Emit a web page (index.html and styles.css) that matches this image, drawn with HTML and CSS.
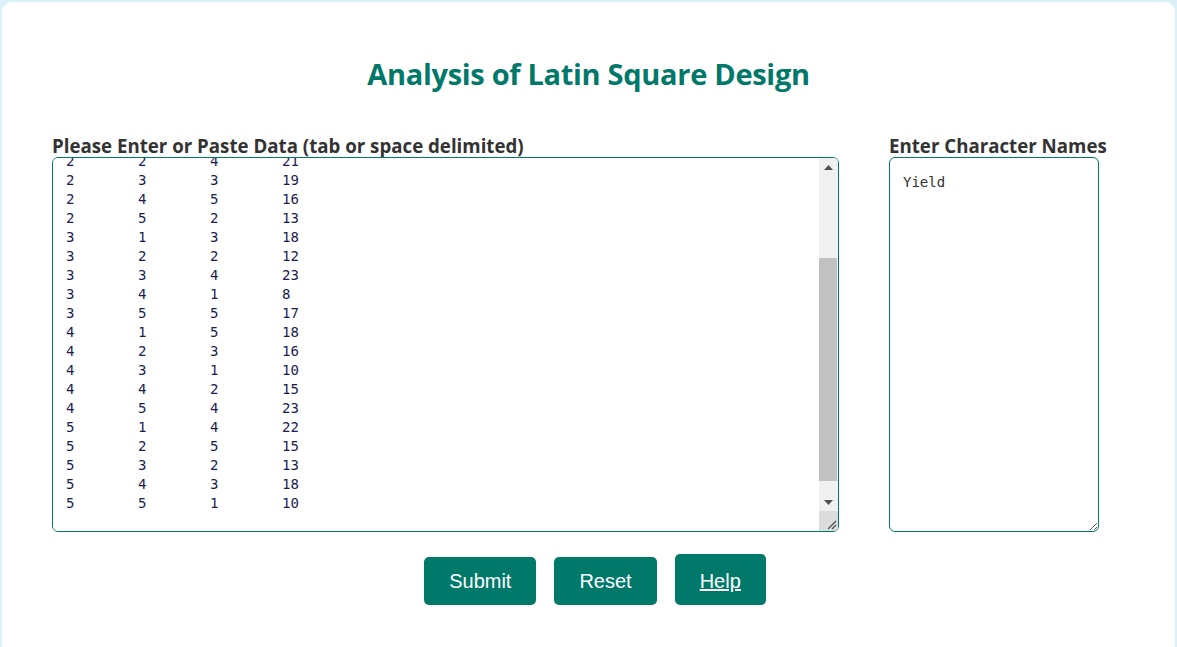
FILE: index.html
```html
<!DOCTYPE html>
<html lang="en">
<head>
<meta charset="utf-8">
<title>Analysis of Latin Square Design</title>
<link rel="stylesheet" href="styles.css">
</head>
<body>
<div class="card">
  <h1 class="title">Analysis of Latin Square Design</h1>
  <form class="form">
    <div class="fields">
      <div class="field field-main">
        <label class="label" for="data">Please Enter or Paste Data (tab or space delimited)</label>
        <div class="box-wrap">
          <textarea id="data" class="box box-data" spellcheck="false">1	1	1	14
1	2	5	22
1	3	4	20
1	4	2	18
1	5	3	25
2	1	2	12
2	2	4	21
2	3	3	19
2	4	5	16
2	5	2	13
3	1	3	18
3	2	2	12
3	3	4	23
3	4	1	8
3	5	5	17
4	1	5	18
4	2	3	16
4	3	1	10
4	4	2	15
4	5	4	23
5	1	4	22
5	2	5	15
5	3	2	13
5	4	3	18
5	5	1	10</textarea>
          <div class="sbar" aria-hidden="true">
            <div class="sbar-btn">
              <svg width="9" height="5" viewBox="0 0 9 5"><polygon points="0,5 9,5 4.5,0" fill="#505050"/></svg>
            </div>
            <div class="sbar-track"><div class="sbar-thumb"></div></div>
            <div class="sbar-btn">
              <svg width="9" height="5" viewBox="0 0 9 5"><polygon points="0,0 9,0 4.5,5" fill="#505050"/></svg>
            </div>
            <div class="sbar-corner">
              <svg width="11" height="11" viewBox="0 0 11 11"><path d="M10 2 L2 10 M10 6 L6 10" stroke="#555" stroke-width="1.3" fill="none"/></svg>
            </div>
          </div>
        </div>
      </div>
      <div class="field field-side">
        <label class="label" for="names">Enter Character Names</label>
        <textarea id="names" class="box box-names" spellcheck="false">Yield</textarea>
      </div>
    </div>
    <div class="actions">
      <button type="button" class="btn">Submit</button>
      <button type="reset" class="btn">Reset</button>
      <a class="btn btn-link" href="#">Help</a>
    </div>
  </form>
</div>
<script src="script.js"></script>
</body>
</html>
```

FILE: styles.css
```css
html, body {
  margin: 0;
  padding: 0;
}
body {
  background: #dcf1f7;
  padding: 2px 2px 0 2px;
  font-family: "Open Sans", "Noto Sans", sans-serif;
  color: #333;
}
.card {
  background: #fff;
  border-radius: 10px;
  min-height: 700px;
  padding: 0 50px;
  box-sizing: border-box;
}
.title {
  margin: 0;
  padding-top: 52px;
  font-size: 29px;
  line-height: 40px;
  font-weight: 700;
  color: #00796b;
  text-align: center;
  letter-spacing: -0.3px;
}
.form {
  margin-top: 40px;
}
.fields {
  display: flex;
  gap: 50px;
}
.field {
  display: flex;
  flex-direction: column;
}
.field-main { width: 787px; }
.field-side { width: 210px; }
.label {
  font-size: 18.7px;
  font-weight: 700;
  line-height: 23px;
  white-space: nowrap;
  color: #333;
}
.box-wrap {
  position: relative;
  height: 375px;
}
.box {
  box-sizing: border-box;
  height: 375px;
  width: 100%;
  border: 1px solid #00796b;
  border-radius: 6px;
  padding: 12px 12px 18px 12px;
  font-family: "DejaVu Sans Mono", "Liberation Mono", monospace;
  font-size: 14px;
  line-height: 19px;
  margin: 0;
  outline: none;
  background: #fff;
  display: block;
}
.box-data {
  color: #1c1c50;
  tab-size: 72px;
  white-space: pre;
  overflow-y: scroll;
  overflow-x: hidden;
  resize: none;
  padding-left: 13px;
}
.box-names {
  color: #333;
  padding-top: 15px;
  padding-left: 13px;
  overflow: hidden;
}
.sbar {
  position: absolute;
  top: 1px;
  right: 1px;
  bottom: 1px;
  width: 19px;
  display: flex;
  flex-direction: column;
  background: #f0f0f0;
  border-top-right-radius: 5px;
  border-bottom-right-radius: 5px;
  overflow: hidden;
  pointer-events: none;
}
.sbar-btn {
  height: 18px;
  display: flex;
  align-items: center;
  justify-content: center;
  flex: none;
}
.sbar-track {
  flex: 1;
  padding-top: 82px;
  padding-bottom: 12px;
  display: flex;
  flex-direction: column;
}
.sbar-thumb {
  flex: 1;
  background: #c1c1c1;
  margin-right: 1px;
}
.sbar-corner {
  height: 20px;
  flex: none;
  background: #dcdcdc;
  display: flex;
  align-items: flex-end;
  justify-content: flex-end;
  padding: 0 1px 1px 0;
  box-sizing: border-box;
}
.actions {
  display: flex;
  justify-content: center;
  align-items: flex-end;
  gap: 18px;
  margin-top: 22px;
  padding-left: 13px;
}
.btn {
  box-sizing: border-box;
  height: 48px;
  padding: 0 25px;
  border: none;
  border-radius: 5px;
  background: #00796b;
  color: #fff;
  font-family: "Liberation Sans", Arial, sans-serif;
  font-size: 20px;
  line-height: 48px;
  cursor: pointer;
}
.btn-link {
  display: inline-block;
  height: 51px;
  line-height: 54px;
  text-decoration: underline;
}
```

FILE: script.js
```js
var ta = document.getElementById('data');
ta.scrollTop = ta.scrollHeight;
```
